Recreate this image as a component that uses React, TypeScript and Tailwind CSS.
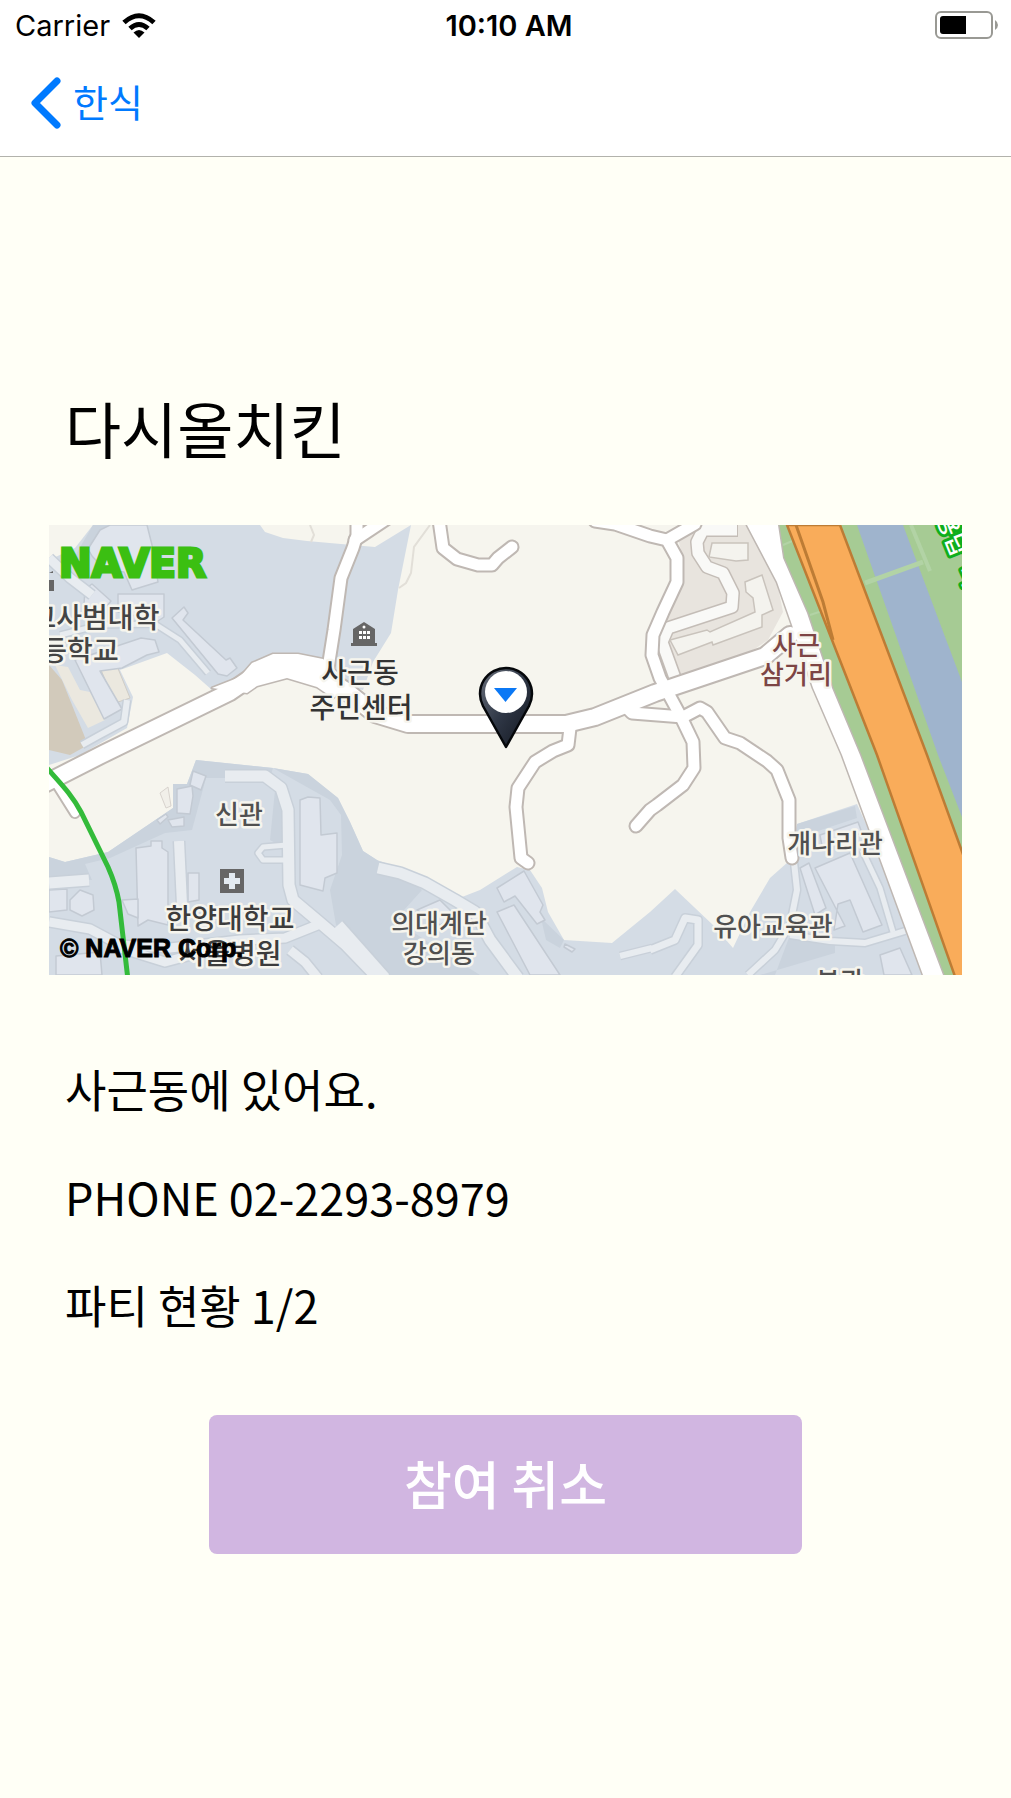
import React from "react";

const LABEL_FONT = "'Noto Sans CJK KR', sans-serif";

const roads: { d: string; w: number }[] = [
  { d: "M40,786 L105,753 L230,692 L262,670 L285,667 L315,672 L345,690 L375,714 L408,724 L566,724 L595,717 L655,693 L765,656 L790,635", w: 16 },
  { d: "M328,668 L334,630 L341,578 L353,548 L357,535 L357,515", w: 11 },
  { d: "M355,540 L388,518", w: 11 },
  { d: "M439,520 L443,548 L457,559 L478,565 L492,565 L498,558 L512,547", w: 11 },
  { d: "M595,521 L615,524 L650,536 L667,540 L677,558 L677,582 L663,612 L653,635 L652,655 L660,678 L680,715 L693,742 L694,768 L683,785 L657,805 L650,810 L636,826", w: 11 },
  { d: "M667,540 L695,524", w: 11 },
  { d: "M625,706 L632,713 L683,717 L700,708 L707,712 L725,738 L740,743 L767,761 L777,770 L789,800 L789,838 L792,858", w: 11 },
  { d: "M570,728 L568,745 L553,751 L535,762 L518,788 L516,807 L521,858 L528,863", w: 11 },
  { d: "M53,778 L75,813", w: 8 },
];

const highway =
  "M747,525 L777,582 L792,625 L813,688 L842,755 L923,975 L943,975 L860,755 L832,688 L807,613 L783,558 L778,525 Z";
const junction =
  "M212,688 L240,677 L252,663 L273,654 L298,654 L323,659 L337,672 L345,690 L333,698 L317,687 L287,678 L257,686 L247,693 Z";

const campusPaths: { d: string; w: number }[] = [
  { d: "M225,776 L265,776 L281,788 L288,810 L289,885 L293,900 L318,921 L345,944 L375,975", w: 11 },
  { d: "M287,845 L263,847 L258,853 L263,860 L287,860", w: 5 },
  { d: "M179,841 L182,905", w: 10 },
  { d: "M49,922 L90,929 L120,945 L170,948 L240,940 L285,938 L320,924", w: 9 },
  { d: "M120,948 L165,962 L210,950", w: 9 },
  { d: "M290,950 L305,962 L318,978", w: 9 },
  { d: "M49,883 L89,880", w: 11 },
  { d: "M378,868 L400,873 L425,883 L455,900 L475,912 L490,940 L518,978", w: 11 },
  { d: "M338,925 L385,978", w: 11 },
  { d: "M794,862 L797,890 L790,925 L775,950 L748,975", w: 6 },
  { d: "M790,935 L830,941 L865,943 L905,931", w: 6 },
  { d: "M862,850 L880,888 L893,932", w: 5 },
  { d: "M650,950 L675,940 L685,918 L698,920 L698,945 L675,977", w: 7 },
  { d: "M620,956 L652,948", w: 6 },
  { d: "M82,745 L100,735 L124,722 L127,700", w: 6 },
  { d: "M60,635 L100,625 L155,624 L180,640 L208,673", w: 5 },
  { d: "M49,558 L70,578 L92,595", w: 9 },
];

const buildings: string[] = [
  "88,549 100,530 110,525 147,525 152,545 158,582 132,590 124,572 105,570 92,556",
  "118,594 164,594 164,617 158,621 118,612",
  "172,618 184,607 188,613 183,620 226,660 230,658 237,668 227,676 218,674",
  "85,589 92,584 111,601 102,612 84,604",
  "75,660 141,638 155,640 159,652 147,655 122,668 100,671 122,709 104,719",
  "136,848 151,846 151,841 162,841 162,848 168,852 168,925 148,920 138,926",
  "122,900 138,899 138,918 128,914",
  "188,873 199,873 199,900 188,902",
  "177,789 192,786 193,796 190,814 177,813",
  "193,771 206,776 201,790 190,785",
  "168,820 184,817 184,826 172,827",
  "157,820 166,814 168,817 160,824",
  "300,800 308,797 320,798 321,835 337,833 337,873 325,878 323,891 300,885",
  "49,890 67,889 67,910 49,912",
  "70,900 80,890 93,895 94,910 82,916 70,910",
  "56,956 100,952 102,975 56,975",
  "497,888 524,871 543,905 540,912 545,920 537,924 515,896 504,902",
  "497,912 514,905 560,975 530,975",
  "417,910 440,900 455,915 440,925",
  "565,944 575,949 572,952 564,947",
  "815,868 850,853 882,925 863,932 850,900 838,904 834,930 845,926",
  "800,868 809,863 826,908 815,915",
  "880,955 900,948 912,975 884,975",
  "820,835 858,822 862,833 822,846",
];

function MapLabel({ x, y, size, fill, children }: { x: number; y: number; size: number; fill: string; children: string }) {
  return (
    <text
      x={x}
      y={y}
      fontSize={size}
      fill={fill}
      stroke="#f6f5ee"
      strokeWidth={5}
      strokeLinejoin="round"
      paintOrder="stroke"
      textAnchor="middle"
      fontFamily={LABEL_FONT}
      fontWeight={500}
    >
      {children}
    </text>
  );
}

function NaverMap() {
  return (
    <svg viewBox="49 525 913 450" className="block w-full" role="img" aria-label="지도">
      <defs>
        <linearGradient id="pin" x1="0" y1="0" x2="1" y2="1">
          <stop offset="0" stopColor="#6a707c" />
          <stop offset="0.5" stopColor="#2f3746" />
          <stop offset="1" stopColor="#11151d" />
        </linearGradient>
      </defs>
      <rect x="49" y="525" width="913" height="450" fill="#f6f5ee" />

      <g fill="#d4dce5">
        <polygon points="49,560 75,548 93,525 260,525 265,532 283,538 307,541 375,547 411,525 398,590 391,633 373,662 363,690 340,685 300,670 240,676 212,690 195,675 167,653 120,670 133,697 127,728 80,755 49,765" />
        <polygon points="49,857 65,862 108,852 173,808 173,784 187,784 196,760 273,768 308,774 338,798 350,822 363,851 377,860 423,877 462,897 480,890 517,867 530,870 542,888 548,912 564,940 612,943 650,912 675,889 713,925 733,948 750,912 770,878 788,862 797,824 857,804 883,862 923,975 49,975" />
      </g>
      <g fill="#cad3dd">
        <polygon points="75,556 93,525 108,525 96,545 78,562" />
        <polygon points="49,857 65,862 108,852 173,808 173,784 187,784 196,760 273,768 270,778 206,778 192,830 165,833 110,858 85,864 92,880 49,876" />
        <polygon points="273,768 308,774 338,798 350,822 363,851 377,860 422,890 395,920 440,950 480,975 385,975 336,925 330,890 342,855 341,815 330,800" />
        <polygon points="275,790 290,800 288,850 270,840" />
        <polygon points="797,824 855,806 857,818 797,838" />
        <polygon points="775,975 790,935 835,942 835,953 760,975" />
        <polygon points="541,918 564,940 560,948 546,940" />
      </g>
      <polygon points="49,665 62,680 70,700 88,745 70,755 49,750" fill="#d2cabb" />
      <polygon points="55,665 68,667 80,690 90,692 105,720 88,728 72,700" fill="#ebe8df" />
      <polygon points="101,670 117,666 130,698 115,703" fill="#ebe8df" stroke="#d0cdc6" />
      <polygon points="160,793 168,787 171,806 166,808" fill="#f1efe9" stroke="#d8d3ce" />

      <g fill="#e0e5ed" stroke="#c3cad3" strokeWidth="1.5" strokeLinejoin="round">
        {buildings.map((p) => (
          <polygon key={p} points={p} />
        ))}
      </g>
      <g fill="none" strokeLinejoin="round">
        {campusPaths.map((r) => (
          <path key={r.d} d={r.d} stroke="#c8d0d9" strokeWidth={r.w + 3} />
        ))}
        {campusPaths.map((r) => (
          <path key={r.d + "f"} d={r.d} stroke="#e8ecf0" strokeWidth={r.w} />
        ))}
      </g>

      <path d="M310,525 L314,535 L311,542 M430,525 L414,547 L411,573 L406,583 L399,588" fill="none" stroke="#e2dfd8" strokeWidth="2" />

      <polygon points="678,538 693,525 747,525 777,582 783,612 768,640 750,652 683,675 670,679 652,645 680,590 683,560" fill="#e8e4de" />
      <g fill="none" strokeLinejoin="round">
        <path d="M738,530 L703,530 L697,542 L698,553 L707,567 L723,573 L733,593 L732,607 L668,628 L662,642 L675,678" stroke="#c4bdb7" strokeWidth="14" />
        <path d="M737,530 L703,530 L697,542 L698,553 L707,567 L723,573 L733,593 L732,607 L668,628 L662,642 L675,678" stroke="#f9f9f7" strokeWidth="11" />
      </g>
      <g fill="#f4f3ee" stroke="#c9c3bc" strokeWidth="1.5">
        <polygon points="712,543 748,543 748,560 736,561 709,557" />
        <polygon points="745,582 762,575 773,610 762,615 762,627 713,645 712,642 678,655 670,640 707,630 710,632 755,612 753,598 746,592" />
      </g>

      <polygon points="778,525 962,525 962,975 943,975 860,755 832,688 807,613 783,558" fill="#a6cb94" />
      <polygon points="857,525 903,525 962,682 962,817 938,755" fill="#9fb4cd" />
      <g fill="none" stroke="#b2d3a5">
        <path d="M865,583 L923,562" strokeWidth="5" />
        <path d="M911,525 L930,571" strokeWidth="4" />
        <path d="M783,545 L797,539 M810,615 L822,611" strokeWidth="2" />
      </g>
      <polygon points="787,525 840,525 927,755 968,868 968,985 958,985 877,755 832,640" fill="#f9ac5a" stroke="#bd7c35" strokeWidth="2.5" />
      <path d="M796,525 L823,602 L833,640" fill="none" stroke="#bd7c35" strokeWidth="3" />

      <g fill="none" stroke="#bfb8b3" strokeLinecap="round" strokeLinejoin="round">
        <path d={highway} strokeWidth="3" />
        <path d={junction} strokeWidth="3" />
        {roads.map((r) => (
          <path key={r.d} d={r.d} strokeWidth={r.w + 4} />
        ))}
      </g>
      <g fill="none" stroke="#ffffff" strokeLinecap="round" strokeLinejoin="round">
        <path d={highway} fill="#ffffff" strokeWidth="0" />
        <path d={junction} fill="#ffffff" strokeWidth="0" />
        {roads.map((r) => (
          <path key={r.d} d={r.d} strokeWidth={r.w} />
        ))}
      </g>

      <path d="M46,767 C62,785 72,795 81,812 L108,867 Q116,885 119,902 L128,980" fill="none" stroke="#33bb3a" strokeWidth="5" />

      <g fill="#666666">
        <path d="M351,646 V643 H353 V629 L364,622 L375,629 V643 H377 V646 Z" />
        <rect x="220" y="869" width="24" height="24" />
        <path d="M49,573 L53,571 V573 Z M49,580 H54 V591 H49 Z" />
      </g>
      <path d="M229,873 H235 V878 H240 V884 H235 V889 H229 V884 H224 V878 H229 Z" fill="#e3eaf1" />
      <g fill="#ffffff">
        <circle cx="364" cy="627" r="1.5" />
        <path d="M359,631 h3 v3 h-3z M363,631 h3 v3 h-3z M367,631 h3 v3 h-3z M359,636 h3 v3 h-3z M363,636 h3 v3 h-3z M367,636 h3 v3 h-3z" />
      </g>

      <MapLabel x={95} y={628} size={28} fill="#444444">고사범대학</MapLabel>
      <MapLabel x={80} y={661} size={28} fill="#444444">등학교</MapLabel>
      <MapLabel x={360} y={683} size={28} fill="#333333">사근동</MapLabel>
      <MapLabel x={361} y={718} size={28} fill="#333333">주민센터</MapLabel>
      <MapLabel x={796} y={655} size={26} fill="#7d4545">사근</MapLabel>
      <MapLabel x={796} y={684} size={26} fill="#7d4545">삼거리</MapLabel>
      <MapLabel x={239} y={824} size={26} fill="#505050">신관</MapLabel>
      <MapLabel x={230} y={929} size={28} fill="#3c3c3c">한양대학교</MapLabel>
      <MapLabel x={230} y={964} size={28} fill="#3c3c3c">서울병원</MapLabel>
      <MapLabel x={439} y={933} size={26} fill="#505050">의대계단</MapLabel>
      <MapLabel x={439} y={963} size={26} fill="#505050">강의동</MapLabel>
      <MapLabel x={835} y={853} size={26} fill="#505050">개나리관</MapLabel>
      <MapLabel x={773} y={936} size={26} fill="#505050">유아교육관</MapLabel>
      <MapLabel x={840} y={991} size={26} fill="#505050">본관</MapLabel>

      <g transform="translate(954 519) rotate(68)" fontFamily={LABEL_FONT} fontSize="24" fontWeight="500" fill="#ffffff" stroke="#0fae1c" strokeWidth="6" strokeLinejoin="round" paintOrder="stroke">
        <text x="-8" y="16">용답</text>
        <text x="-8" y="-8">용답나들목</text>
        <text x="48" y="16">나</text>
      </g>

      <path d="M506,747 L483,706 A26,26 0 1 1 529,706 Z" fill="url(#pin)" stroke="#05070a" strokeWidth="2.5" strokeLinejoin="round" />
      <circle cx="506" cy="692" r="21" fill="#ffffff" />
      <path d="M494,688 H517 L505.500,702 Z" fill="#0b78f5" />

      <text x="59" y="577" fontFamily="'DejaVu Sans', sans-serif" fontWeight="700" fontSize="39" fill="#3bbf12" stroke="#3bbf12" strokeWidth="3">
        NAVER
      </text>
      <text x="60" y="957" fontFamily="'Liberation Sans', sans-serif" fontWeight="700" fontSize="25" fill="#000000" stroke="#000000" strokeWidth="1">
        © NAVER Corp.
      </text>
    </svg>
  );
}

function StatusBar() {
  return (
    <div className="grid h-[50px] grid-cols-3 items-center pr-3 pl-[15px] font-[Inter,sans-serif] text-[29px] leading-none text-black">
      <div className="flex items-center gap-3">
        <span>Carrier</span>
        <svg viewBox="0 0 34 25" className="h-[25px] w-[34px]" aria-label="Wi-Fi">
          <g fill="none" stroke="#000" strokeWidth="5">
            <path d="M2,9.500 Q17,-4 32,9.500" />
            <path d="M8,15.500 Q17,7.500 26,15.500" />
          </g>
          <path d="M11.500,19.500 Q17,14.500 22.500,19.500 L17,25 Z" fill="#000" />
        </svg>
      </div>
      <time className="pl-1 text-center font-semibold whitespace-nowrap">10:10 AM</time>
      <svg viewBox="0 0 64 28" className="h-7 w-16 justify-self-end" aria-label="배터리">
        <rect x="1" y="1" width="56" height="26" rx="5" fill="none" stroke="#999994" strokeWidth="2" />
        <path d="M8,5 H31 V23 H8 Q5,23 5,20 V8 Q5,5 8,5 Z" fill="#000" />
        <path d="M60,9 Q63,11 63,14 Q63,17 60,19 Z" fill="#999994" />
      </svg>
    </div>
  );
}

export default function App() {
  return (
    <div className="min-h-screen bg-[#fffff6] font-['Noto_Sans_CJK_KR',sans-serif] text-black">
      <header className="border-b border-[#b2b2ac] bg-white">
        <StatusBar />
        <nav className="flex h-[106px] items-center px-[31px]">
          <a href="#" className="flex items-center gap-3 text-[#007aff]">
            <svg viewBox="0 0 30 52" className="h-[52px] w-[30px]" aria-hidden="true">
              <path d="M26,4 L4,26 L26,48" fill="none" stroke="currentColor" strokeWidth="7" strokeLinecap="round" strokeLinejoin="round" />
            </svg>
            <span className="pb-1 text-[38px] leading-none font-normal">한식</span>
          </a>
        </nav>
      </header>
      <main className="px-[49px] pt-[231px]">
        <h1 className="pl-4 text-[61px] leading-[80px]">다시올치킨</h1>
        <div className="mt-[57px]">
          <NaverMap />
        </div>
        <div className="flex flex-col gap-11 pt-[82px] pl-4 text-[45px] leading-[64px]">
          <p>사근동에 있어요.</p>
          <p>PHONE 02-2293-8979</p>
          <p>파티 현황 1/2</p>
        </div>
        <button
          type="button"
          className="mx-auto mt-[78px] block h-[139px] w-[65%] rounded-lg bg-[#d1b6e1] pb-1 text-[52px] leading-none font-medium text-white"
        >
          참여 취소
        </button>
      </main>
    </div>
  );
}
